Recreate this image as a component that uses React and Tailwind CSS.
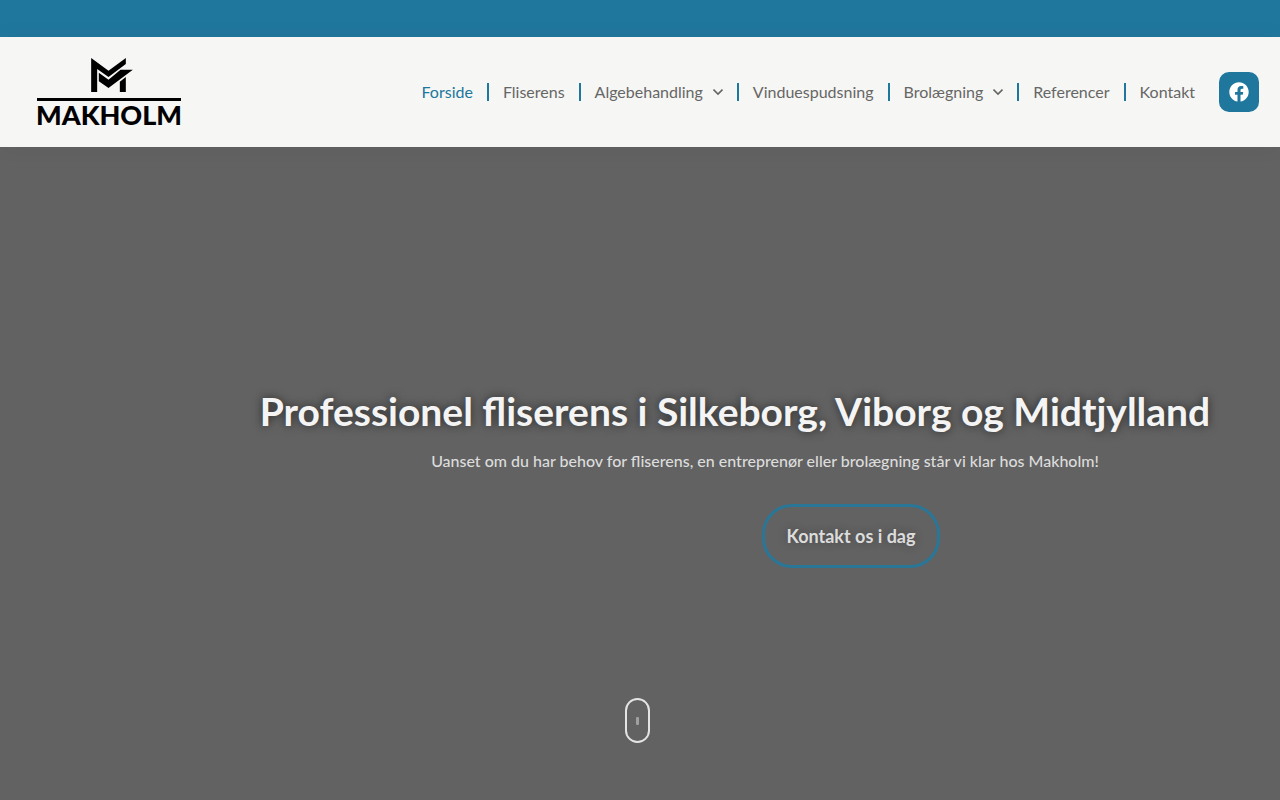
const menu = [
  { label: 'Forside', active: true },
  { label: 'Fliserens' },
  { label: 'Algebehandling', sub: true },
  { label: 'Vinduespudsning' },
  { label: 'Brolægning', sub: true },
  { label: 'Referencer' },
  { label: 'Kontakt' },
];

function Logo() {
  return (
    <a href="#" className="flex w-36 flex-col items-center pt-0.5 text-black">
      <svg viewBox="20 18 125 102" className="ml-1.5 h-[34px] w-[42px]" fill="currentColor" aria-hidden="true">
        <path d="M20 18L72 56L124 18V36L72 75L38 51V120H20Z" />
        <path d="M43 62L72 83L108 53H145L72 108L43 88Z" />
        <path d="M106 89L124 75V120H106Z" />
      </svg>
      <span className="mt-1.5 h-[3px] w-full bg-black" />
      <span className="text-[27px] leading-7 font-black">MAKHOLM</span>
    </a>
  );
}

function Chevron() {
  return (
    <svg viewBox="0 0 10 8" className="h-2 w-2.5" fill="none" stroke="currentColor" strokeWidth="1.6" aria-hidden="true">
      <path d="M0.500 1.500L5 6L9.500 1.500" />
    </svg>
  );
}

function Header() {
  return (
    <header className="relative flex h-[110px] items-center justify-between bg-[#f6f6f4] pr-[21px] pl-[37px] shadow-[0_0_20px_rgba(0,0,0,0.05)]">
      <Logo />
      <div className="flex items-center gap-2.5">
        <nav>
          <ul className="flex items-center">
            {menu.map((item, i) => (
              <li key={item.label} className="flex items-center">
                {i > 0 && <span className="h-[18px] w-0.5 bg-[#20779e]" />}
                <a
                  href="#"
                  className={`flex items-center gap-2.5 px-3.5 text-base leading-5 ${item.active ? 'text-[#20779e]' : 'text-[#666666]'}`}
                >
                  {item.label}
                  {item.sub && <Chevron />}
                </a>
              </li>
            ))}
          </ul>
        </nav>
        <a href="#" aria-label="Facebook" className="flex size-10 items-center justify-center rounded-[10px] bg-[#20779e] text-white">
          <svg viewBox="0 0 512 512" className="size-5" fill="currentColor" aria-hidden="true">
            <path d="M504 256C504 119 393 8 256 8S8 119 8 256c0 123.780 90.690 226.380 209.250 245V327.690h-63V256h63v-54.640c0-62.150 37-96.480 93.670-96.480 27.140 0 55.520 4.840 55.520 4.840v61h-31.280c-30.800 0-40.410 19.120-40.410 38.730V256h68.780l-11 71.690h-57.780V501C413.310 482.380 504 379.780 504 256z" />
          </svg>
        </a>
      </div>
    </header>
  );
}

export default function App() {
  return (
    <div className="flex min-h-screen flex-col bg-[#626262] font-['Lato',sans-serif]">
      <div className="h-[37px] bg-[#20779e]" />
      <Header />
      <main className="flex grow flex-col items-center overflow-hidden pt-60 pb-[57px]">
        <h1 className="ml-[190px] text-[39px] leading-12 font-bold text-[#f4f4f4] [text-shadow:0_0_10px_rgba(0,0,0,0.6)]">
          Professionel fliserens i Silkeborg, Viborg og Midtjylland
        </h1>
        <p className="mt-3.5 ml-[250px] text-base leading-6 font-medium text-[#dcdcdc]">
          Uanset om du har behov for fliserens, en entreprenør eller brolægning står vi klar hos Makholm!
        </p>
        <a
          href="#"
          className="mt-[31px] ml-[422px] flex h-16 w-[178px] items-center justify-center rounded-[30px] border-[3px] border-[#2a7697] text-lg font-bold text-[#dcdcdc] [text-shadow:0_0_10px_rgba(0,0,0,0.3)]"
        >
          Kontakt os i dag
        </a>
        <a href="#" aria-label="Rul ned" className="mt-auto mr-[5px] flex h-[45px] w-[25px] items-center justify-center rounded-full border-2 border-[#e4e4e4]">
          <span className="h-2 w-[3px] rounded-[1px] bg-[#a0a0a0]" />
        </a>
      </main>
    </div>
  );
}
